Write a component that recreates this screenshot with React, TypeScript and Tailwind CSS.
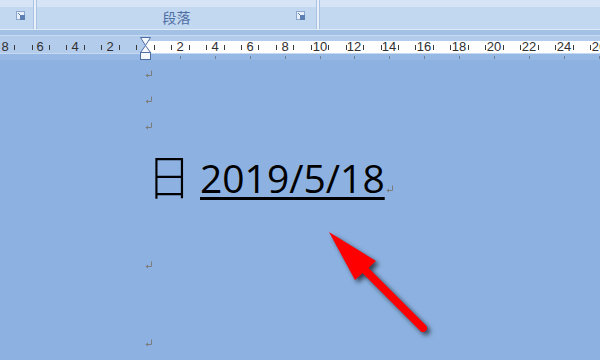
import React from "react";

const LABELS = [-8, -6, -4, -2, 2, 4, 6, 8, 10, 12, 14, 16, 18, 20, 22, 24, 26];
const ZERO = 145;
const UNIT = 17.45;

function Launcher() {
  return (
    <svg width="10" height="10" viewBox="0 0 10 10">
      <rect x="0.5" y="0.5" width="8" height="8" fill="#e9f0f9" stroke="#8aa6cc" />
      <rect x="4" y="4" width="5" height="5" fill="#5d7fb3" />
      <path d="M2 2 L5 5" stroke="#5d7fb3" strokeWidth="1" />
    </svg>
  );
}

function ReturnMark() {
  return (
    <svg width="8" height="8" viewBox="0 0 8 8" className="shrink-0">
      <path d="M6.5 0.5 V5.5 H2" stroke="#7c7c7c" strokeWidth="1" fill="none" />
      <path d="M0.5 5.5 L3 3.5 L3 7.5 Z" fill="#7c7c7c" />
    </svg>
  );
}

function Separator() {
  return (
    <div className="flex h-full w-[4px] shrink-0">
      <div className="w-px bg-[#a9c2e2]" />
      <div className="w-[2px] bg-[#eaf1fa]" />
      <div className="w-px bg-[#a9c2e2]" />
    </div>
  );
}

function Ruler() {
  return (
    <div className="relative h-[12px] bg-[#b4ccec]" style={{ fontFamily: '"Liberation Sans", Arial, sans-serif' }}>
      <div className="absolute top-0 bottom-0 right-0 bg-white" style={{ left: ZERO }} />
      {LABELS.map((n) => {
        const x = ZERO + n * UNIT;
        return (
          <React.Fragment key={n}>
            <div className="absolute top-[4px] h-[5px] w-px bg-[#3a3a3a]" style={{ left: Math.round(x - UNIT / 2) }} />
            <div className="absolute top-[4px] h-[5px] w-px bg-[#3a3a3a]" style={{ left: Math.round(x + UNIT / 2) }} />
            <div
              className="absolute top-[-1px] w-[20px] text-center text-[13px] leading-[14px] text-[#303030]"
              style={{ left: Math.round(x - 10) }}
            >
              {Math.abs(n)}
            </div>
          </React.Fragment>
        );
      })}
      <div className="absolute top-[4px] h-[5px] w-px bg-[#3a3a3a]" style={{ left: Math.round(ZERO - UNIT / 2) }} />
      <div className="absolute top-[4px] h-[5px] w-px bg-[#3a3a3a]" style={{ left: Math.round(ZERO + UNIT / 2) }} />
    </div>
  );
}

export default function App() {
  return (
    <div className="relative w-[600px] h-[360px] overflow-hidden bg-[#8db2e2]">
      {/* ribbon */}
      <div className="flex h-[29px] bg-gradient-to-b from-[#d6e4f5] from-[24%] to-[#c2d7f0] to-[24%]">
        <div className="flex w-[33px] items-center justify-end pr-[7px] pt-[2px]">
          <Launcher />
        </div>
        <Separator />
        <div className="relative flex w-[279px] items-end justify-center pb-[3px]">
          <span
            className="text-[14px] leading-[17px] text-[#4d6ea3]"
            style={{ fontFamily: '"Noto Sans CJK SC", sans-serif' }}
          >
            段落
          </span>
          <div className="absolute right-[10px] top-[11px]">
            <Launcher />
          </div>
        </div>
        <Separator />
        <div className="flex-1" />
      </div>
      {/* bands under ribbon */}
      <div className="h-px bg-[#dfeaf7]" />
      <div className="h-[5px] bg-[#a3c0e5]" />
      <div className="h-px bg-[#c9dbf1]" />
      <div className="h-[5px] bg-[#b4ccec]" />
      <Ruler />
      <div className="h-px bg-[#c7d9f0]" />
      <div className="relative h-[6px] bg-[#95b8e4]">
        {LABELS.filter((n) => n > 0).map((n) => (
          <div
            key={n}
            className="absolute top-[2px] h-[3px] w-px bg-[#6f7f95]"
            style={{ left: Math.round(ZERO + n * UNIT) }}
          />
        ))}
      </div>

      {/* document */}
      <div className="flex flex-col pl-[145px]">
        <div className="h-[10px]" />
        <div className="h-[26px]"><ReturnMark /></div>
        <div className="h-[26px]"><ReturnMark /></div>
        <div className="h-[26px]"><ReturnMark /></div>
        <div className="flex h-[113px] items-baseline pt-[4px]">
          <span
            className="ml-[2px] scale-y-[1.08] text-[44px] leading-[44px] font-light text-black"
            style={{ fontFamily: '"Noto Sans CJK SC", sans-serif' }}
          >
            日
          </span>
          <span
            className="ml-[9px] text-[39px] leading-[44px] text-black underline decoration-[3px] underline-offset-[4px]"
            style={{ fontFamily: '"Open Sans", sans-serif' }}
          >
            2019/5/18
          </span>
          <span className="ml-[1px]"><ReturnMark /></span>
        </div>
        <div className="h-[78px]"><ReturnMark /></div>
        <div className="h-[26px]"><ReturnMark /></div>
      </div>

      {/* indent marker */}
      <svg className="absolute left-[139px] top-[37px]" width="13" height="24" viewBox="0 0 13 24">
        <path d="M1.5 0.5 H11.5 L6.5 8.5 Z" fill="#f4f7fb" stroke="#4b6da3" />
        <path d="M6.5 8.5 L11.5 15.5 H1.5 Z" fill="#f4f7fb" stroke="#4b6da3" />
        <rect x="1.5" y="15.5" width="10" height="7" fill="#f4f7fb" stroke="#4b6da3" />
      </svg>

      {/* red arrow annotation */}
      <svg
        className="absolute left-0 top-0"
        width="600"
        height="360"
        style={{ filter: "drop-shadow(3px 3px 2.5px rgba(0,0,0,0.65))" }}
      >
        <line x1="365" y1="270" x2="423" y2="328" stroke="#ff0000" strokeWidth="8" strokeLinecap="round" />
        <polygon points="329,232 376,261 355,280" fill="#ff0000" />
      </svg>
    </div>
  );
}
